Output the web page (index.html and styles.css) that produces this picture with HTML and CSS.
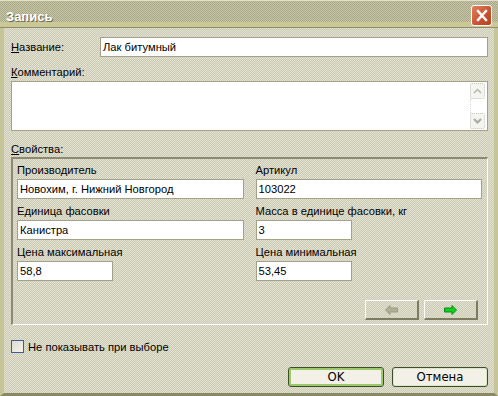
FILE: index.html
```html
<!DOCTYPE html>
<html lang="ru">
<head>
<meta charset="utf-8">
<title>Запись</title>
<link rel="stylesheet" href="styles.css">
</head>
<body>
<div class="window">
  <div class="titlebar">
    <span class="title">Запись</span>
    <button class="close" aria-label="Закрыть">
      <svg width="18" height="19" viewBox="0 0 18 19"><path d="M5 5 L13 14 M13 5 L5 14" stroke="#fff" stroke-width="2.4" stroke-linecap="square"/></svg>
    </button>
  </div>
  <div class="body">
    <div class="name-row">
      <span class="name-label"><u>Н</u>азвание:</span>
      <div class="field grow">Лак битумный</div>
    </div>
    <div class="lbl comment-lbl"><u>К</u>омментарий:</div>
    <div class="textarea">
      <div class="scrollbar">
        <span class="sbtn"><svg width="9" height="6" viewBox="0 0 9 6"><path d="M1 5 L4.5 1.5 L8 5" fill="none" stroke="#b8b8b0" stroke-width="1.5"/></svg></span>
        <span class="strack"></span>
        <span class="sbtn"><svg width="9" height="6" viewBox="0 0 9 6"><path d="M1 1 L4.5 4.5 L8 1" fill="none" stroke="#a8a8a0" stroke-width="2"/></svg></span>
      </div>
    </div>
    <div class="lbl props-lbl"><u>С</u>войства:</div>
    <div class="props">
      <div class="grid">
        <div class="cell">
          <div class="plabel">Производитель</div>
          <div class="field">Новохим, г. Нижний Новгород</div>
        </div>
        <div class="cell">
          <div class="plabel">Артикул</div>
          <div class="field">103022</div>
        </div>
        <div class="cell">
          <div class="plabel">Единица фасовки</div>
          <div class="field">Канистра</div>
        </div>
        <div class="cell">
          <div class="plabel">Масса в единице фасовки, кг</div>
          <div class="field short">3</div>
        </div>
        <div class="cell">
          <div class="plabel">Цена максимальная</div>
          <div class="field short">58,8</div>
        </div>
        <div class="cell">
          <div class="plabel">Цена минимальная</div>
          <div class="field short">53,45</div>
        </div>
      </div>
      <div class="nav">
        <button class="navbtn" aria-label="Назад">
          <svg width="13" height="10" viewBox="0 0 13 10"><path d="M0.5 5 L5 0.5 L5 3 L12.5 3 L12.5 7 L5 7 L5 9.5 Z" fill="#b0ae94" stroke="#9c9a80" stroke-width="1"/></svg>
        </button>
        <button class="navbtn" aria-label="Вперёд">
          <svg width="13" height="10" viewBox="0 0 13 10"><path d="M12.5 5 L8 0.5 L8 3 L0.5 3 L0.5 7 L8 7 L8 9.5 Z" fill="#10d020" stroke="#0a8a14" stroke-width="1"/></svg>
        </button>
      </div>
    </div>
    <div class="check-row">
      <span class="checkbox"></span>
      <span>Не показывать при выборе</span>
    </div>
    <div class="buttons">
      <button class="btn default">OK</button>
      <button class="btn">Отмена</button>
    </div>
  </div>
</div>
</body>
</html>
```
FILE: styles.css
```css
html, body {
  margin: 0;
  padding: 0;
  background: #d8d7c6;
}

.window {
  width: 498px;
  height: 396px;
  box-sizing: border-box;
  display: flex;
  flex-direction: column;
  font-family: "Liberation Sans", Arial, sans-serif;
  font-size: 11.2px;
  color: #000;
  background-color: #d8d7c6;
  background-image: repeating-conic-gradient(#cbcab6 0 25%, #e3e2d0 0 50%);
  background-size: 2px 2px;
}

.titlebar {
  height: 28px;
  flex: none;
  box-sizing: border-box;
  display: flex;
  justify-content: space-between;
  align-items: flex-start;
  padding: 0 6px 0 6px;
  border-top: 1px solid #e4dccc;
  background-image:
    linear-gradient(to bottom, transparent 21px, #c9c896 21px, #c9c896 26px, #8f8d6e 26px),
    repeating-conic-gradient(#a9a890 0 25%, #c6c59e 0 50%);
  background-size: 100% 100%, 2px 2px;
}

.title {
  margin-top: 9px;
  font-weight: bold;
  font-size: 13px;
  line-height: 14px;
  color: #fff;
  text-shadow: 1px 1px 0 #6e6c50;
}

.close {
  margin-top: 4px;
  width: 21px;
  height: 21px;
  padding: 0;
  display: flex;
  align-items: center;
  justify-content: center;
  border: 1px solid #fff;
  border-radius: 3px;
  background: linear-gradient(to bottom right, #e2805c, #c8502e 60%, #b8401f);
}

.body {
  flex: 1;
  display: flex;
  flex-direction: column;
  padding: 9px 6px 0 7px;
  border-left: 4px solid #c6c59a;
  border-right: 4px solid #c6c59a;
  border-bottom: 3px solid #8a8966;
}

.name-row {
  display: flex;
  align-items: center;
  height: 20px;
}

.name-label {
  width: 89px;
  flex: none;
}

.field {
  height: 20px;
  box-sizing: border-box;
  border: 1px solid #a4a18a;
  background: #fff;
  padding: 0 2px;
  line-height: 18px;
  white-space: nowrap;
  overflow: hidden;
}

.grow {
  flex: 1;
}

.short {
  width: 96px;
}

.lbl {
  height: 14px;
  line-height: 14px;
}

.comment-lbl {
  margin-top: 8px;
}

.textarea {
  margin-top: 2px;
  height: 50px;
  box-sizing: border-box;
  border: 1px solid #a4a18a;
  background: #fff;
  display: flex;
  justify-content: flex-end;
  padding: 1px 2px 1px 0;
}

.scrollbar {
  width: 15px;
  display: flex;
  flex-direction: column;
  justify-content: space-between;
}

.sbtn {
  height: 16px;
  box-sizing: border-box;
  border: 1px dotted #c8c8c0;
  border-radius: 2px;
  display: flex;
  align-items: center;
  justify-content: center;
  background: #f4f4f0;
}

.strack {
  flex: 1;
  border-left: 1px dotted #d8d8d0;
}

.props-lbl {
  margin-top: 11px;
}

.props {
  margin-top: 1px;
  height: 168px;
  box-sizing: border-box;
  border-top: 2px solid #8c8a70;
  border-left: 2px solid #8c8a70;
  border-right: 1px solid #fff;
  border-bottom: 1px solid #fff;
  padding: 4px 5px 4px 4px;
  display: flex;
  flex-direction: column;
}

.grid {
  display: grid;
  grid-template-columns: 1fr 1fr;
  column-gap: 12px;
  row-gap: 5px;
}

.plabel {
  height: 14px;
  line-height: 14px;
  margin-bottom: 2px;
  white-space: nowrap;
}

.nav {
  margin-top: auto;
  display: flex;
  justify-content: flex-end;
  gap: 5px;
  padding-right: 4px;
}

.navbtn {
  width: 54px;
  height: 20px;
  padding: 0;
  box-sizing: border-box;
  border-top: 1px solid #fff;
  border-left: 1px solid #fff;
  border-right: 2px solid #7e7c60;
  border-bottom: 2px solid #7e7c60;
  background: transparent;
  display: flex;
  align-items: center;
  justify-content: center;
}

.check-row {
  margin-top: 15px;
  display: flex;
  align-items: center;
  height: 13px;
  gap: 4px;
}

.checkbox {
  width: 13px;
  height: 13px;
  box-sizing: border-box;
  border: 1px solid #3f5f8f;
  background: linear-gradient(to bottom right, #dcdcd0, #f4f4ee);
}

.buttons {
  margin-top: 14px;
  display: flex;
  justify-content: flex-end;
  gap: 8px;
}

.btn {
  width: 96px;
  height: 20px;
  padding: 0;
  box-sizing: border-box;
  border: 1px solid #3e4f25;
  border-radius: 3px;
  background: #f3f0e8;
  font-family: "Liberation Sans Narrow", "DejaVu Sans Condensed", "Liberation Sans", sans-serif;
  font-size: 13px;
  line-height: 16px;
  color: #000;
  box-shadow: inset 0 0 0 1px #d9e6c8;
}

.btn.default {
  box-shadow: inset 0 0 0 2px #9bc96c;
}
```
